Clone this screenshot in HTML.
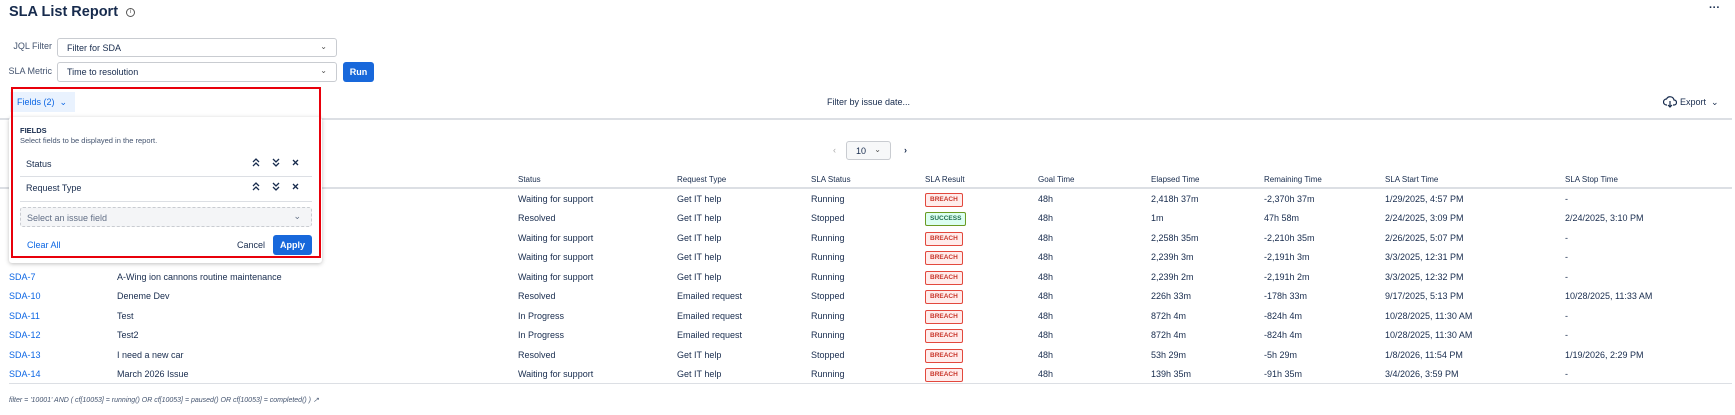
<!DOCTYPE html><html><head><meta charset="utf-8"><style>
*{box-sizing:border-box;margin:0;padding:0}
body{width:1735px;height:415px;background:#fff;font-family:"Liberation Sans",sans-serif;color:#172b4d;font-size:9px;position:relative;overflow:hidden}
.a{position:absolute;white-space:nowrap}
.sel{position:absolute;border:1px solid #c9ccd1;border-radius:3px;background:#fff;font-size:9px;padding:4px 9px;color:#172b4d}
.car{position:absolute;right:9px;top:3px;font-size:8px;color:#555}
.h{font-size:8px;color:#172b4d}
.b{position:absolute;font-size:6.5px;font-weight:bold;border:1px solid #e2483d;color:#c9372c;background:#ffeceb;border-radius:2px;padding:2px 4px;line-height:8px}
.s{border-color:#6a9a23;color:#216e4e;background:#dcfff1}
.k{color:#0c66e4}
svg{position:absolute}
</style></head><body>
<div class="a" style="left:9px;top:4px;font-size:14.5px;font-weight:bold">SLA List Report</div>
<div class="a" style="left:126px;top:8px;width:9px;height:9px;border:1px solid #555;border-radius:50%;font-size:6px;text-align:center;line-height:7px;color:#555">i</div>
<div class="a" style="left:1709px;top:2px;font-size:11px;font-weight:bold">···</div>
<div class="a" style="left:0;top:41px;width:52px;text-align:right;color:#44546f">JQL Filter</div>
<div class="sel" style="left:57px;top:38px;width:280px;height:19px">Filter for SDA<span class="car">⌄</span></div>
<div class="a" style="left:0;top:66px;width:52px;text-align:right;color:#44546f">SLA Metric</div>
<div class="sel" style="left:57px;top:62px;width:280px;height:20px">Time to resolution<span class="car">⌄</span></div>
<div class="a" style="left:343px;top:62px;width:31px;height:20px;background:#1868db;color:#fff;border-radius:3px;font-weight:bold;text-align:center;line-height:20px">Run</div>
<div class="a" style="left:827px;top:97px">Filter by issue date...</div>
<svg style="left:1663px;top:96px" width="14" height="12" viewBox="0 0 14 12"><path d="M4 9H3.5a3 3 0 0 1 0-6 4 4 0 0 1 7.5 1 2.5 2.5 0 0 1 0 5H10M7 5v6M5 9l2 2 2-2" fill="none" stroke="#172b4d" stroke-width="1.2"/></svg>
<div class="a" style="left:1680px;top:97px">Export &nbsp;⌄</div>
<div class="a" style="left:0;top:118px;width:1732px;height:2px;background:#dcdfe4"></div>
<div class="a" style="left:833px;top:145px;color:#aaa">‹</div>
<div class="sel" style="left:846px;top:141px;width:45px;height:19px;background:#f7f8f9">10 <span class="car" style="right:9px">⌄</span></div>
<div class="a" style="left:904px;top:145px;font-weight:bold">›</div>
<div class="a" style="left:0;top:187px;width:1732px;height:2px;background:#dcdfe4"></div>
<div class="a" style="left:9px;top:383px;width:1723px;height:1px;background:#dcdfe4"></div>
<div class="a" style="left:9px;top:396px;font-size:7px;font-style:italic;color:#44546f">filter = '10001' AND ( cf[10053] = running() OR cf[10053] = paused() OR cf[10053] = completed() ) ↗</div>
<div class="a h" style="left:518px;top:175px">Status</div><div class="a h" style="left:677px;top:175px">Request Type</div><div class="a h" style="left:811px;top:175px">SLA Status</div><div class="a h" style="left:925px;top:175px">SLA Result</div><div class="a h" style="left:1038px;top:175px">Goal Time</div><div class="a h" style="left:1151px;top:175px">Elapsed Time</div><div class="a h" style="left:1264px;top:175px">Remaining Time</div><div class="a h" style="left:1385px;top:175px">SLA Start Time</div><div class="a h" style="left:1565px;top:175px">SLA Stop Time</div>
<div id="rows"></div>
<div class="a" style="left:9px;top:117px;width:313px;height:146px;background:#fff;box-shadow:0 1px 4px rgba(0,0,0,.25);border-radius:3px"></div>
<div class="a" style="left:10px;top:92px;width:65px;height:20px;background:#e9f2fe;color:#0c66e4;padding:5px 7px">Fields (2) &nbsp;⌄</div>
<div class="a" style="left:20px;top:126px;font-size:7.5px;font-weight:bold">FIELDS</div>
<div class="a" style="left:20px;top:136px;font-size:7.5px;color:#44546f">Select fields to be displayed in the report.</div>
<div class="a" style="left:26px;top:159px">Status</div>
<div class="a" style="left:26px;top:183px">Request Type</div>
<svg style="left:250px;top:158px" width="50" height="36" viewBox="0 0 50 36"><g fill="none" stroke="#172b4d" stroke-width="1.3"><path d="M3 4l3-3 3 3M3 8l3-3 3 3M23 1l3 3 3-3M23 5l3 3 3-3M43 2l5 5M48 2l-5 5"/><path transform="translate(0,24)" d="M3 4l3-3 3 3M3 8l3-3 3 3M23 1l3 3 3-3M23 5l3 3 3-3M43 2l5 5M48 2l-5 5"/></g></svg>
<div class="a" style="left:20px;top:176px;width:292px;height:1px;background:#dcdfe4"></div>
<div class="a" style="left:20px;top:201px;width:292px;height:1px;background:#dcdfe4"></div>
<div class="a" style="left:20px;top:207px;width:292px;height:20px;border:1px dashed #c9ccd1;background:#f4f5f7;border-radius:3px;color:#626f86;padding:5px 6px">Select an issue field<span style="position:absolute;right:10px;top:3px">⌄</span></div>
<div class="a" style="left:27px;top:240px;color:#0c66e4">Clear All</div>
<div class="a" style="left:237px;top:240px">Cancel</div>
<div class="a" style="left:273px;top:235px;width:39px;height:20px;background:#1868db;color:#fff;border-radius:3px;font-weight:bold;text-align:center;line-height:20px">Apply</div>
<div class="a" style="left:11px;top:87px;width:310px;height:171px;border:2px solid #e8000b"></div>
<script>
var d=[["SDA-1","","Waiting for support","Get IT help","Running",0,"2,418h 37m","-2,370h 37m","1/29/2025, 4:57 PM","-"],
["SDA-2","","Resolved","Get IT help","Stopped",1,"1m","47h 58m","2/24/2025, 3:09 PM","2/24/2025, 3:10 PM"],
["SDA-3","","Waiting for support","Get IT help","Running",0,"2,258h 35m","-2,210h 35m","2/26/2025, 5:07 PM","-"],
["SDA-4","","Waiting for support","Get IT help","Running",0,"2,239h 3m","-2,191h 3m","3/3/2025, 12:31 PM","-"],
["SDA-7","A-Wing ion cannons routine maintenance","Waiting for support","Get IT help","Running",0,"2,239h 2m","-2,191h 2m","3/3/2025, 12:32 PM","-"],
["SDA-10","Deneme Dev","Resolved","Emailed request","Stopped",0,"226h 33m","-178h 33m","9/17/2025, 5:13 PM","10/28/2025, 11:33 AM"],
["SDA-11","Test","In Progress","Emailed request","Running",0,"872h 4m","-824h 4m","10/28/2025, 11:30 AM","-"],
["SDA-12","Test2","In Progress","Emailed request","Running",0,"872h 4m","-824h 4m","10/28/2025, 11:30 AM","-"],
["SDA-13","I need a new car","Resolved","Get IT help","Stopped",0,"53h 29m","-5h 29m","1/8/2026, 11:54 PM","1/19/2026, 2:29 PM"],
["SDA-14","March 2026 Issue","Waiting for support","Get IT help","Running",0,"139h 35m","-91h 35m","3/4/2026, 3:59 PM","-"]];
var ys=[199,218,238,257,277,296,316,335,355,374],h="";
d.forEach(function(r,i){var t=ys[i]-5;
h+='<div class="a k" style="left:9px;top:'+t+'px">'+r[0]+'</div><div class="a" style="left:117px;top:'+t+'px">'+r[1]+'</div><div class="a" style="left:518px;top:'+t+'px">'+r[2]+'</div><div class="a" style="left:677px;top:'+t+'px">'+r[3]+'</div><div class="a" style="left:811px;top:'+t+'px">'+r[4]+'</div>';
h+='<div class="b'+(r[5]?' s':'')+'" style="left:925px;top:'+(ys[i]-6)+'px">'+(r[5]?'SUCCESS':'BREACH')+'</div>';
h+='<div class="a" style="left:1038px;top:'+t+'px">48h</div><div class="a" style="left:1151px;top:'+t+'px">'+r[6]+'</div><div class="a" style="left:1264px;top:'+t+'px">'+r[7]+'</div><div class="a" style="left:1385px;top:'+t+'px">'+r[8]+'</div><div class="a" style="left:1565px;top:'+t+'px">'+r[9]+'</div>';});
document.getElementById('rows').innerHTML=h;
</script>
</body></html>
